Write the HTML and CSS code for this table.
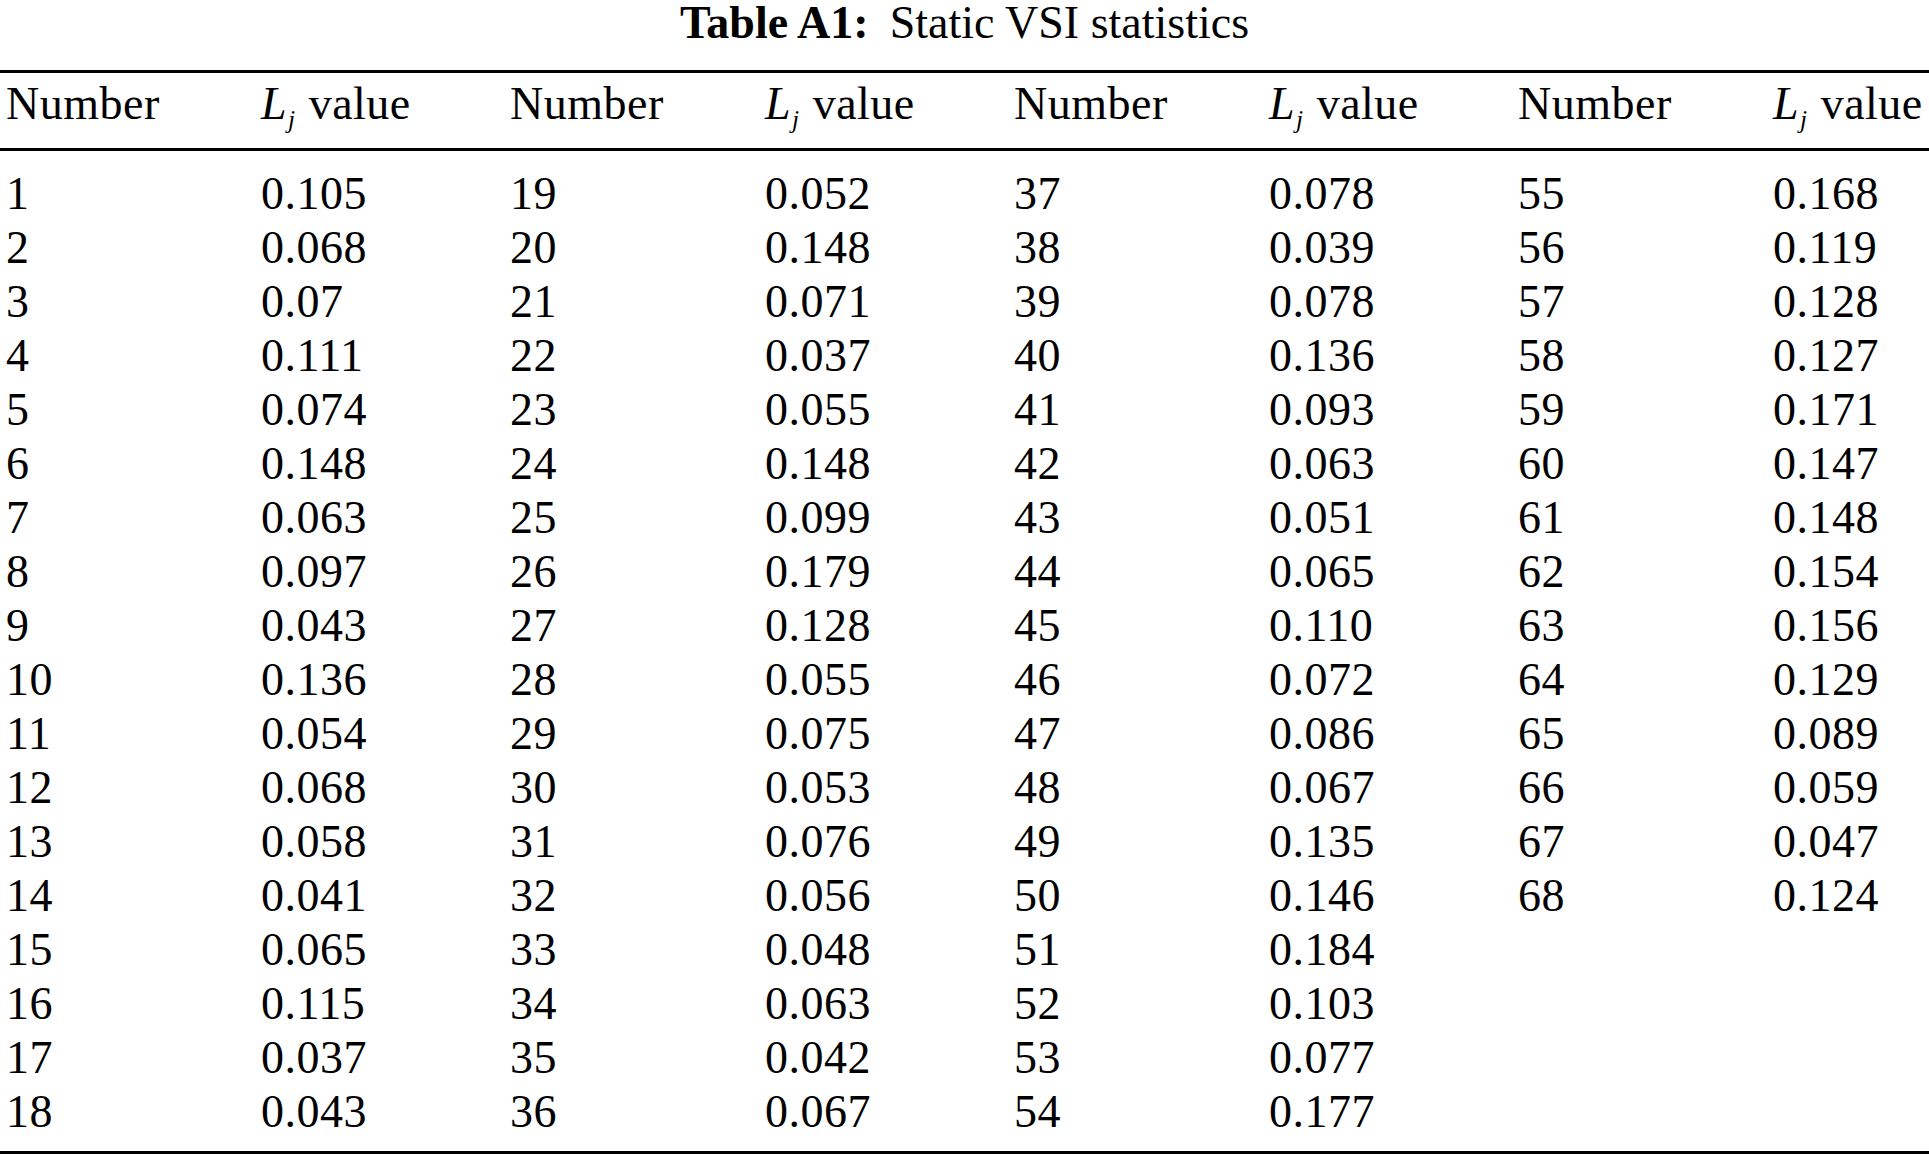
FILE: index.html
```html
<!DOCTYPE html>
<html>
<head>
<meta charset="utf-8">
<link rel="stylesheet" href="styles.css">
</head>
<body>
<div class="caption"><b>Table A1:</b><span class="cap-gap"></span>Static VSI statistics</div>
<table class="stats">
<colgroup>
<col class="c-a"><col class="c-b"><col class="c-a"><col class="c-b"><col class="c-a"><col class="c-b"><col class="c-a"><col class="c-last">
</colgroup>
<thead>
<tr>
<th>Number</th><th><i>L</i><sub><i>j</i></sub> value</th>
<th>Number</th><th><i>L</i><sub><i>j</i></sub> value</th>
<th>Number</th><th><i>L</i><sub><i>j</i></sub> value</th>
<th>Number</th><th><i>L</i><sub><i>j</i></sub> value</th>
</tr>
</thead>
<tbody>
<tr><td>1</td><td>0.105</td><td>19</td><td>0.052</td><td>37</td><td>0.078</td><td>55</td><td>0.168</td></tr>
<tr><td>2</td><td>0.068</td><td>20</td><td>0.148</td><td>38</td><td>0.039</td><td>56</td><td>0.119</td></tr>
<tr><td>3</td><td>0.07</td><td>21</td><td>0.071</td><td>39</td><td>0.078</td><td>57</td><td>0.128</td></tr>
<tr><td>4</td><td>0.111</td><td>22</td><td>0.037</td><td>40</td><td>0.136</td><td>58</td><td>0.127</td></tr>
<tr><td>5</td><td>0.074</td><td>23</td><td>0.055</td><td>41</td><td>0.093</td><td>59</td><td>0.171</td></tr>
<tr><td>6</td><td>0.148</td><td>24</td><td>0.148</td><td>42</td><td>0.063</td><td>60</td><td>0.147</td></tr>
<tr><td>7</td><td>0.063</td><td>25</td><td>0.099</td><td>43</td><td>0.051</td><td>61</td><td>0.148</td></tr>
<tr><td>8</td><td>0.097</td><td>26</td><td>0.179</td><td>44</td><td>0.065</td><td>62</td><td>0.154</td></tr>
<tr><td>9</td><td>0.043</td><td>27</td><td>0.128</td><td>45</td><td>0.110</td><td>63</td><td>0.156</td></tr>
<tr><td>10</td><td>0.136</td><td>28</td><td>0.055</td><td>46</td><td>0.072</td><td>64</td><td>0.129</td></tr>
<tr><td>11</td><td>0.054</td><td>29</td><td>0.075</td><td>47</td><td>0.086</td><td>65</td><td>0.089</td></tr>
<tr><td>12</td><td>0.068</td><td>30</td><td>0.053</td><td>48</td><td>0.067</td><td>66</td><td>0.059</td></tr>
<tr><td>13</td><td>0.058</td><td>31</td><td>0.076</td><td>49</td><td>0.135</td><td>67</td><td>0.047</td></tr>
<tr><td>14</td><td>0.041</td><td>32</td><td>0.056</td><td>50</td><td>0.146</td><td>68</td><td>0.124</td></tr>
<tr><td>15</td><td>0.065</td><td>33</td><td>0.048</td><td>51</td><td>0.184</td><td></td><td></td></tr>
<tr><td>16</td><td>0.115</td><td>34</td><td>0.063</td><td>52</td><td>0.103</td><td></td><td></td></tr>
<tr><td>17</td><td>0.037</td><td>35</td><td>0.042</td><td>53</td><td>0.077</td><td></td><td></td></tr>
<tr><td>18</td><td>0.043</td><td>36</td><td>0.067</td><td>54</td><td>0.177</td><td></td><td></td></tr>
</tbody>
</table>
</body>
</html>
```
FILE: styles.css
```css
html, body {
  margin: 0;
  padding: 0;
  background: #fff;
}
body {
  width: 1929px;
  font-family: "Liberation Serif", "Times New Roman", serif;
  color: #000;
}
.caption {
  text-align: center;
  font-size: 46px;
  line-height: 52px;
  height: 52px;
  margin-top: -3px;
  white-space: nowrap;
}
.caption b {
  font-weight: bold;
}
.cap-gap {
  display: inline-block;
  width: 21px;
}
.stats {
  margin-top: 21px;
  width: 1929px;
  table-layout: fixed;
  border-collapse: collapse;
  border-top: 3px solid #000;
  border-bottom: 3px solid #000;
  font-size: 46px;
  letter-spacing: 0.5px;
}
.c-a { width: 255px; }
.c-b { width: 249px; }
.c-last { width: 163px; }
.stats th, .stats td {
  text-align: left;
  font-weight: normal;
  padding: 0 0 0 6px;
  line-height: 54px;
  height: 54px;
  white-space: nowrap;
  vertical-align: middle;
}
.stats thead th {
  padding-top: 4px;
  padding-bottom: 17px;
  border-bottom: 3px solid #000;
}
.stats sub {
  font-size: 0.55em;
  vertical-align: -0.35em;
  line-height: 0;
  margin-left: 1px;
  margin-right: 1px;
}
.stats tbody tr:first-child td {
  padding-top: 16px;
}
.stats tbody tr:last-child td {
  padding-bottom: 12px;
}
```
